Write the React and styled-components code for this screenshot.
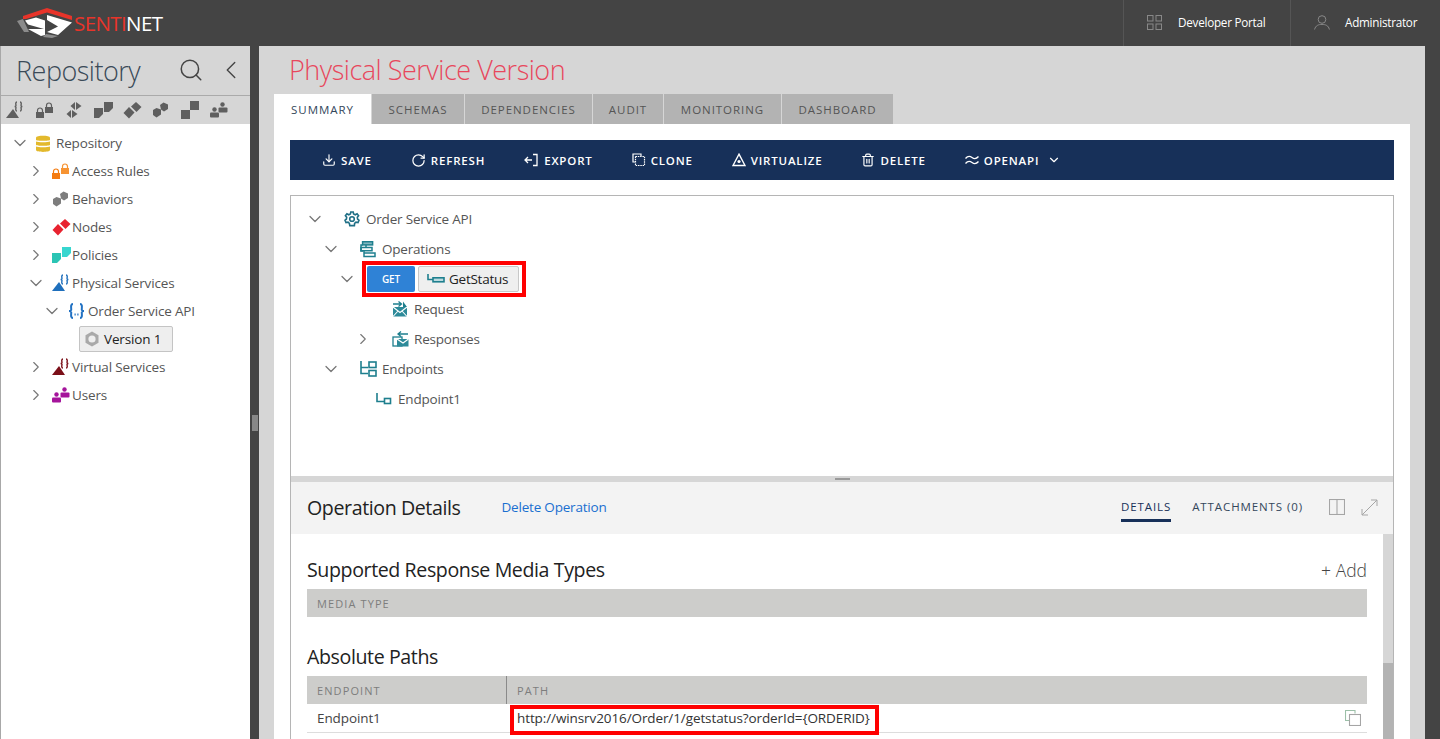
import React from "react";
import styled, { createGlobalStyle } from "styled-components";
import { ChevronDown, ChevronRight, ChevronLeft, Search, Download, RotateCw, Trash2 } from "lucide-react";

const GlobalStyle = createGlobalStyle`
  html, body {
    margin: 0;
    height: 100%;
    overflow: hidden;
    background: #444;
  }
  body {
    font-family: "Open Sans", "Noto Sans", "Liberation Sans", sans-serif;
    color: #555;
  }
  * {
    box-sizing: border-box;
  }
`;

const Page = styled.div`
  width: 1440px;
  height: 739px;
  display: flex;
  flex-direction: column;
  overflow: hidden;
`;

const TopBar = styled.header`
  flex: 0 0 46px;
  display: flex;
  align-items: stretch;
  background: #444;
`;
const Brand = styled.div`
  display: flex;
  align-items: center;
  padding-left: 16px;
  margin-right: auto;
`;
const BrandName = styled.span`
  font-size: 20.5px;
  font-weight: 400;
  letter-spacing: -0.6px;
  color: #fff;
  margin-left: 0;

  b {
    font-weight: 400;
    color: #e8342a;
  }
`;
const TopLink = styled.a`
  width: ${(p) => p.$width}px;
  display: flex;
  align-items: center;
  gap: ${(p) => p.$gap}px;
  padding: 0 0 2px 23px;
  border-left: 1px solid #555;
  color: #fff;
  font-size: 11.7px;
  letter-spacing: -0.25px;
`;

const Body = styled.div`
  flex: 1;
  min-height: 0;
  display: flex;
`;

const Sidebar = styled.aside`
  flex: 0 0 250px;
  display: flex;
  flex-direction: column;
  background: #fff;
  border-left: 1px solid #a8a8a8;
`;
const SideHead = styled.div`
  height: 49px;
  display: flex;
  align-items: center;
  padding: 0 4px 1px 15px;
  background: #d6d6d6;
  color: #3a4a58;
`;
const SideTitle = styled.h2`
  margin: 0 auto 0 0;
  font-size: 27px;
  font-weight: 300;
  letter-spacing: -0.5px;
`;
const SideTools = styled.div`
  display: flex;
  align-items: center;
  gap: 12px;
  color: #444;
`;
const FilterBar = styled.div`
  height: 29px;
  display: flex;
  align-items: center;
  gap: 9px;
  padding-left: 5px;
  background: #d6d6d6;
  border-top: 1px solid #aaa;
`;
const FilterIcon = styled.span`
  width: 20px;
  display: flex;
  justify-content: center;
`;
const SideTree = styled.div`
  padding-top: 5px;
`;
const SideRow = styled.div`
  height: 28px;
  display: flex;
  align-items: center;
  padding-left: ${(p) => 11 + p.$depth * 16}px;
  font-size: 13.5px;
  letter-spacing: -0.15px;
  color: #555;
`;
const Toggle = styled.span`
  flex: 0 0 16px;
  min-width: 0;
  width: 16px;
  display: flex;
  justify-content: center;
  color: #777;

  svg {
    flex-shrink: 0;
  }
`;
const SideIcon = styled.span`
  flex: 0 0 28px;
  display: flex;
  padding-left: 8px;
`;
const SelectedNode = styled.div`
  margin: 1px 0 1px 78px;
  width: 94px;
  height: 26px;
  display: flex;
  align-items: center;
  gap: 4px;
  padding-left: 4px;
  background: #eee;
  border: 1px solid #c4c4c4;
  border-radius: 2px;
  color: #222;
  font-size: 13.5px;
  letter-spacing: -0.15px;
`;

const Gutter = styled.div`
  flex: 0 0 9px;
  display: flex;
  align-items: flex-start;
  justify-content: center;
  background: #444;

  &::before {
    content: "";
    width: 6px;
    height: 16px;
    margin-top: 369px;
    background: #888;
  }
`;

const Main = styled.main`
  flex: 0 0 1166px;
  display: flex;
  flex-direction: column;
  background: #d6d6d6;
  padding: 0 15px;
`;
const PageTitle = styled.h1`
  height: 48px;
  margin: 0;
  padding: 7px 0 0 15px;
  font-size: 27px;
  line-height: 34px;
  font-weight: 300;
  letter-spacing: -0.48px;
  color: #e8475c;
`;
const Tabs = styled.nav`
  flex: 0 0 30px;
  display: flex;
  gap: 1px;
`;
const Tab = styled.a`
  width: ${(p) => p.$width}px;
  display: flex;
  align-items: center;
  justify-content: center;
  background: ${(p) => (p.$active ? "#fff" : "#b3b3b3")};
  color: ${(p) => (p.$active ? "#33475b" : "#555")};
  font-size: 11.5px;
  letter-spacing: 0.95px;
`;
const Content = styled.section`
  flex: 1;
  min-height: 0;
  display: flex;
  flex-direction: column;
  background: #fff;
  padding: 16px 16px 0;
`;
const Toolbar = styled.div`
  flex: 0 0 40px;
  display: flex;
  align-items: center;
  gap: 39px;
  padding-left: 32px;
  background: #173059;
  color: #fff;
`;
const ToolButton = styled.button`
  display: flex;
  align-items: center;
  gap: 5px;
  padding: 0;
  border: 0;
  background: none;
  color: inherit;
  font-family: inherit;
  font-size: 11.5px;
  font-weight: 600;
  letter-spacing: 0.82px;
`;

const Frame = styled.div`
  flex: 1;
  min-height: 0;
  margin-top: 15px;
  display: flex;
  flex-direction: column;
  border: 1px solid #b5b5b5;
  border-bottom: 0;
`;
const TreePane = styled.div`
  flex: 0 0 280px;
  padding-top: 8px;
`;
const OpRow = styled.div`
  height: 30px;
  display: flex;
  align-items: center;
  padding-left: ${(p) => 16 + p.$depth * 16}px;
  font-size: 13.5px;
  letter-spacing: -0.2px;
  color: #555;
`;
const OpIcon = styled.span`
  flex: 0 0 43px;
  display: flex;
  padding-left: 21px;
`;
const Method = styled.div`
  margin-left: 12px;
  padding-right: 2px;
  display: flex;
  gap: 3px;
  outline: 4px solid #f00;
  outline-offset: 1px;
`;
const GetBadge = styled.span`
  width: 48px;
  height: 26px;
  display: flex;
  align-items: center;
  justify-content: center;
  background: #2f82d6;
  border-radius: 2px;
  color: #fff;
  font-size: 10px;
  font-weight: 600;
`;
const OpName = styled.span`
  width: 101px;
  height: 26px;
  display: flex;
  align-items: center;
  gap: 4px;
  padding-left: 8px;
  background: #efefef;
  border: 1px solid #c8c8c8;
  border-radius: 2px;
  color: #222;
  font-size: 13.5px;
  letter-spacing: -0.25px;
`;

const Splitter = styled.div`
  flex: 0 0 6px;
  display: flex;
  align-items: center;
  justify-content: center;
  background: #d6d6d6;

  &::before {
    content: "";
    width: 15px;
    height: 2px;
    background: #999;
  }
`;
const DetailHead = styled.div`
  flex: 0 0 52px;
  display: flex;
  align-items: center;
  padding: 0 15px 2px 16px;
  background: #f3f3f3;
`;
const DetailTitle = styled.h3`
  margin: 0;
  font-size: 19.6px;
  font-weight: 400;
  letter-spacing: -0.4px;
  color: #222;
`;
const DeleteLink = styled.a`
  margin-left: 41px;
  margin-right: auto;
  font-size: 13.5px;
  letter-spacing: -0.2px;
  color: #1a6fd0;
`;
const DetailTab = styled.a`
  align-self: flex-start;
  height: 32px;
  margin-top: 8px;
  margin-right: ${(p) => p.$gap || 0}px;
  padding-top: 3px;
  display: flex;
  align-items: center;
  border-bottom: 3px solid ${(p) => (p.$active ? "#173059" : "transparent")};
  color: ${(p) => (p.$active ? "#173059" : "#33475b")};
  font-size: 11.5px;
  letter-spacing: 0.9px;
`;
const HeadIcon = styled.span`
  display: flex;
  margin-left: ${(p) => p.$gap}px;
  color: #a5a5a5;
`;

const DetailBody = styled.div`
  flex: 1;
  min-height: 0;
  display: flex;
`;
const Scroller = styled.div`
  flex: 1;
  min-width: 0;
  padding: 0 16px;
`;
const Scrollbar = styled.div`
  flex: 0 0 10px;
  display: flex;
  flex-direction: column;
  background: #d6d6d6;

  &::after {
    content: "";
    margin-top: auto;
    height: 76px;
    background: #b3b3b3;
  }
`;
const SectionHead = styled.div`
  height: ${(p) => p.$height}px;
  display: flex;
  align-items: flex-end;
  justify-content: space-between;
  padding-bottom: 6px;
`;
const SectionTitle = styled.h4`
  margin: 0;
  font-size: 19.6px;
  line-height: 26px;
  font-weight: 400;
  letter-spacing: -0.4px;
  color: #222;
`;
const AddLink = styled.a`
  font-size: 17.5px;
  line-height: 26px;
  font-weight: 300;
  color: #444;
`;
const Grid = styled.div`
  display: grid;
  grid-template-columns: ${(p) => p.$columns};
`;
const HeadCell = styled.div`
  height: 28px;
  display: flex;
  align-items: center;
  padding-left: 10px;
  background: #cdcdcb;
  border-left: ${(p) => (p.$divided ? "1px solid #8a8a8a" : "0")};
  color: #7d7d7d;
  font-size: 11px;
  letter-spacing: 1.1px;
`;
const Cell = styled.div`
  height: 29px;
  display: flex;
  align-items: center;
  padding-left: 10px;
  border-bottom: 1px solid #ddd;
  color: #444;
  font-size: 13.5px;
  letter-spacing: -0.1px;
`;
const PathCell = styled(Cell)`
  justify-content: space-between;
  padding-right: 6px;
`;
const PathText = styled.span`
  height: 22px;
  margin: 3px 0 0 -2px;
  padding: 0 5px 4px 3px;
  display: flex;
  align-items: center;
  outline: 4px solid #f00;
  color: #333;
`;
const CopyIcon = styled.span`
  display: flex;
`;
const Spacer = styled.div`
  height: 32px;
`;

const Logo = () => (
  <svg width="58" height="30" viewBox="0 0 58 30">
    <path d="M7 8 L31 0 L56 8 V12 L31 4.5 L10 11 H7 Z" fill="#e8342a" />
    <path d="M9 12.5 L20 9.5 L29 12.5 L29 27 L25 28 L12 21 L28 21 L12 16.5 Z" fill="#fff" />
    <path d="M31 7 L56 14.5 L42 27 L31 24 L42 18.5 L31 12 Z" fill="#fff" />
    <path d="M1 13 L7 11 L13 24 L8 24 Z" fill="#aaa" opacity="0.7" />
    <path d="M30 26 L42 28 L36 30 L27 29 Z" fill="#aaa" opacity="0.7" />
  </svg>
);

const Brace = ({ x, color }) => (
  <g fill="none" stroke={color} strokeWidth="1.4">
    <path d={`M${x + 2} 1 C${x} 1 ${x + 1} 4 ${x + 1} 4.5 C${x + 1} 5.5 ${x} 5.5 ${x - 0.4} 5.5 C${x} 5.5 ${x + 1} 5.5 ${x + 1} 6.5 C${x + 1} 7 ${x} 10 ${x + 2} 10`} />
    <path d={`M${x + 5} 1 C${x + 7} 1 ${x + 6} 4 ${x + 6} 4.5 C${x + 6} 5.5 ${x + 7} 5.5 ${x + 7.4} 5.5 C${x + 7} 5.5 ${x + 6} 5.5 ${x + 6} 6.5 C${x + 6} 7 ${x + 7} 10 ${x + 5} 10`} />
  </g>
);

const ServiceGlyph = ({ color, brace = color }) => (
  <svg width="20" height="18" viewBox="0 0 20 18">
    <path d="M0 17 L7 8 L13 17 Z" fill={color} />
    <Brace x={9} color={brace} />
  </svg>
);
const LockShape = ({ x, y, color }) => (
  <g>
    <rect x={x} y={y + 4} width="8" height="6" fill={color} />
    <path d={`M${x + 1.5} ${y + 4} V${y + 2.5} a2.5 2.5 0 0 1 5 0 V${y + 4}`} fill="none" stroke={color} strokeWidth="1.2" />
  </g>
);
const LocksGlyph = ({ color, second = color }) => (
  <svg width="18" height="18" viewBox="0 0 18 18">
    <LockShape x={0} y={7} color={color} />
    <LockShape x={9} y={2} color={second} />
  </svg>
);
const RoutesGlyph = ({ color }) => (
  <svg width="18" height="18" viewBox="0 0 18 18" fill={color}>
    <path d="M10 1 L5.5 5 L10 9 Z M11 1 L16.5 5 L11 9 Z M6 9 L1.5 13 L6 17 Z M7 9 L12.5 13 L7 17 Z" />
  </svg>
);
const PolicyGlyph = ({ color, second = color }) => (
  <svg width="19" height="16" viewBox="0 0 19 16">
    <path d="M0 6 H9 V12 L5 16 H0 Z" fill={color} />
    <path d="M10 0 H19 V6 L15 10 H10 Z" fill={second} />
  </svg>
);
const NodesGlyph = ({ color }) => (
  <svg width="19" height="17" viewBox="0 0 19 17" fill={color}>
    <path d="M6 5 L11.5 10.5 L6 16.5 L0.5 11 Z" />
    <path d="M13 0 L18.5 5 L13.5 10 L8 4.5 Z" />
  </svg>
);
const BehaviorsGlyph = ({ color }) => (
  <svg width="18" height="16" viewBox="0 0 18 16" fill={color}>
    <path d="M4.5 6 L9 7.5 L9 12.5 L4.5 15.5 L1 13 L1 8 Z" />
    <path d="M11.5 0.5 L16 2.5 L16 7 L12 9.5 L9 7.5 L8 3 Z" />
  </svg>
);
const StepsGlyph = ({ color }) => (
  <svg width="18" height="18" viewBox="0 0 18 18" fill={color}>
    <rect x="0" y="9" width="9" height="9" />
    <rect x="9" y="0" width="9" height="9" />
  </svg>
);
const UsersGlyph = ({ color }) => (
  <svg width="18" height="16" viewBox="0 0 18 16" fill={color}>
    <circle cx="4.5" cy="7.5" r="2.2" />
    <rect x="0" y="10.5" width="9" height="5" rx="1" />
    <circle cx="12.5" cy="2.5" r="2.2" />
    <rect x="8.5" y="5.5" width="9" height="5" rx="1" />
  </svg>
);
const DbGlyph = () => (
  <svg width="14" height="17" viewBox="0 0 14 17" fill="#e3b92c">
    <path d="M0 2.5 C0 0 14 0 14 2.5 V5 C14 6 0 6 0 5 Z" />
    <path d="M0 6.5 C2 7.6 12 7.6 14 6.5 V10 C14 11 0 11 0 10 Z" />
    <path d="M0 11.5 C2 12.6 12 12.6 14 11.5 V15 C14 17.5 0 17.5 0 15 Z" />
  </svg>
);
const ApiGlyph = () => (
  <svg width="17" height="16" viewBox="0 0 17 16" fill="none" stroke="#2272c3" strokeWidth="2">
    <path d="M5 1 C2 1 3.5 6 3.2 7 C3 7.8 2 8 1 8 C2 8 3 8.2 3.2 9 C3.5 10 2 15 5 15" />
    <path d="M12 1 C15 1 13.5 6 13.8 7 C14 7.8 15 8 16 8 C15 8 14 8.2 13.8 9 C13.5 10 15 15 12 15" />
    <path d="M6.5 11.5 h1.2 M9.3 11.5 h1.2" strokeWidth="2" />
  </svg>
);
const VersionGlyph = () => (
  <svg width="16" height="16" viewBox="0 0 16 16">
    <path d="M8 0.5 L14.5 4.2 V11.8 L8 15.5 L1.5 11.8 V4.2 Z" fill="#a9a9a9" />
    <circle cx="8" cy="8" r="3.6" fill="#eee" />
  </svg>
);

const teal = "#1e7f8e";
const GearGlyph = () => (
  <svg width="16" height="16" viewBox="0 0 16 16" fill="none" stroke="#1f6f86" strokeWidth="1.6">
    <circle cx="8" cy="8" r="2.3" />
    <path d="M6.8 1 H9.2 L9.6 3 L11.3 3.8 L13.1 2.8 L14.6 4.7 L13.3 6.3 L13.6 8 L15 9.3 L14 11.5 L12 11.2 L10.6 12.5 L10.4 14.6 H5.8 L5.4 12.5 L4 11.2 L2 11.5 L1 9.3 L2.4 8 L2.7 6.3 L1.4 4.7 L2.9 2.8 L4.7 3.8 L6.4 3 Z" />
  </svg>
);
const OperationsGlyph = () => (
  <svg width="16" height="17" viewBox="0 0 16 17" fill="none" stroke={teal} strokeWidth="1.5">
    <rect x="2.6" y="0.7" width="10" height="3.2" fill="#7fb5be" />
    <path d="M2.6 3.9 H1 V10 H3" />
    <rect x="1" y="6.5" width="11" height="3.2" />
    <path d="M4 10 V15.5 H15 V12 H4" />
    <path d="M6 3.9 V6.5" />
  </svg>
);
const OperationGlyph = () => (
  <svg width="18" height="10" viewBox="0 0 18 10" fill="none" stroke={teal} strokeWidth="1.6">
    <path d="M1 0 V5.5 H6" />
    <rect x="6" y="3.8" width="11" height="4" fill="#bcdadf" />
  </svg>
);
const RequestGlyph = () => (
  <svg width="16" height="16" viewBox="0 0 16 16">
    <path d="M1 3 H9 M6.5 0.5 L9.5 3 L6.5 5.5" fill="none" stroke={teal} strokeWidth="1.3" />
    <rect x="1" y="6" width="14" height="9.5" fill="#2d8a99" />
    <path d="M1 6 L8 11.5 L15 6 M1 15.5 L6 10 M15 15.5 L10 10" fill="none" stroke="#fff" strokeWidth="1.1" />
    <path d="M11 0.5 L15 6 H11 Z" fill={teal} />
  </svg>
);
const ResponsesGlyph = () => (
  <svg width="17" height="16" viewBox="0 0 17 16">
    <path d="M6 3 H16 M9 0.5 L6 3 L9 5.5" fill="none" stroke={teal} strokeWidth="1.3" />
    <rect x="1" y="6" width="9" height="9" fill="none" stroke={teal} strokeWidth="1.3" />
    <rect x="5" y="8" width="11.5" height="7.5" fill="#2d8a99" />
    <path d="M5 8 L11 12 L16.5 8" fill="none" stroke="#fff" strokeWidth="1.1" />
  </svg>
);
const EndpointsGlyph = () => (
  <svg width="17" height="16" viewBox="0 0 17 16" fill="none" stroke={teal} strokeWidth="1.6">
    <path d="M1 0 V12.5 H8 M1 6.5 H8" />
    <rect x="9" y="1" width="7" height="5.5" />
    <rect x="9" y="9.5" width="7" height="5.5" />
  </svg>
);
const EndpointGlyph = () => (
  <svg width="16" height="12" viewBox="0 0 16 12" fill="none" stroke={teal} strokeWidth="1.6">
    <path d="M1 0 V8.5 H8" />
    <rect x="8.5" y="5.5" width="6" height="5" />
  </svg>
);

const ExportGlyph = () => (
  <svg width="15" height="14" viewBox="0 0 15 14" fill="none" stroke="currentColor" strokeWidth="1.3">
    <path d="M9 1.5 H13 V12.5 H9 M8 7 H1 M4 4 L1 7 L4 10" />
  </svg>
);
const CloneGlyph = () => (
  <svg width="14" height="14" viewBox="0 0 14 14" fill="none" stroke="currentColor" strokeWidth="1.2">
    <path d="M9 3 V1 H1 V9 H3" />
    <rect x="3.5" y="3.5" width="9" height="9" strokeDasharray="1.5 0.8" />
  </svg>
);
const VirtualizeGlyph = () => (
  <svg width="14" height="14" viewBox="0 0 14 14" fill="none" stroke="currentColor" strokeWidth="1.4">
    <path d="M7 1.2 L13 12.5 H1 Z" />
    <circle cx="7" cy="8.5" r="1.6" fill="currentColor" stroke="none" />
  </svg>
);
const ApproxGlyph = () => (
  <svg width="14" height="14" viewBox="0 0 14 14" fill="none" stroke="currentColor" strokeWidth="1.3">
    <path d="M0.5 5.5 C3 2.5 5 3 7 4.5 C9 6 11 6.5 13.5 3.5" />
    <path d="M0.5 10.5 C3 7.5 5 8 7 9.5 C9 11 11 11.5 13.5 8.5" />
  </svg>
);
const PortalGlyph = () => (
  <svg width="15" height="15" viewBox="0 0 15 15" fill="none" stroke="#888" strokeWidth="1">
    <rect x="0.5" y="0.5" width="5.5" height="5.5" />
    <rect x="9" y="0.5" width="5.5" height="5.5" />
    <rect x="0.5" y="9" width="5.5" height="5.5" />
    <rect x="9" y="9" width="5.5" height="5.5" />
  </svg>
);
const AccountGlyph = () => (
  <svg width="16" height="15" viewBox="0 0 16 15" fill="none" stroke="#888" strokeWidth="1">
    <circle cx="8" cy="4.5" r="3.8" />
    <path d="M0.6 14.5 C1.5 10.5 4.5 9.4 8 9.4 C11.5 9.4 14.5 10.5 15.4 14.5" />
  </svg>
);
const SplitGlyph = () => (
  <svg width="16" height="16" viewBox="0 0 16 16" fill="none" stroke="currentColor" strokeWidth="1.1">
    <rect x="0.5" y="0.5" width="15" height="15" />
    <path d="M8 0.5 V15.5" />
  </svg>
);
const ExpandGlyph = () => (
  <svg width="17" height="17" viewBox="0 0 17 17" fill="none" stroke="currentColor" strokeWidth="1">
    <path d="M1 16 L16 1 M10 1 H16 V7 M1 10 V16 H7" />
  </svg>
);
const CopyGlyph = () => (
  <svg width="16" height="16" viewBox="0 0 16 16" fill="none" strokeWidth="1.1">
    <path d="M10 3.5 V0.5 H0.5 V10.5 H4" stroke="#9cc0a8" />
    <rect x="4.5" y="4.5" width="11" height="11" stroke="#a5a5a5" />
  </svg>
);

const Caret = ({ open }) => (
  <Toggle>{open ? <ChevronDown size={20} strokeWidth={1.5} /> : <ChevronRight size={18} strokeWidth={1.5} />}</Toggle>
);

const grey = "#5f5f5f";
const filters = [
  <ServiceGlyph color={grey} />,
  <LocksGlyph color={grey} />,
  <RoutesGlyph color={grey} />,
  <PolicyGlyph color={grey} />,
  <NodesGlyph color={grey} />,
  <BehaviorsGlyph color={grey} />,
  <StepsGlyph color={grey} />,
  <UsersGlyph color={grey} />,
];

const sideTree = [
  { depth: 1, label: "Access Rules", icon: <LocksGlyph color="#f47b10" second="#f79433" /> },
  { depth: 1, label: "Behaviors", icon: <BehaviorsGlyph color="#7d7d7d" /> },
  { depth: 1, label: "Nodes", icon: <NodesGlyph color="#e8222f" /> },
  { depth: 1, label: "Policies", icon: <PolicyGlyph color="#2bc4b4" second="#37d6cf" /> },
  { depth: 1, label: "Physical Services", open: true, icon: <ServiceGlyph color="#1f6fbc" /> },
  { depth: 2, label: "Order Service API", open: true, icon: <ApiGlyph /> },
];

const toolbar = [
  { label: "SAVE", icon: <Download size={14} /> },
  { label: "REFRESH", icon: <RotateCw size={15} /> },
  { label: "EXPORT", icon: <ExportGlyph /> },
  { label: "CLONE", icon: <CloneGlyph /> },
  { label: "VIRTUALIZE", icon: <VirtualizeGlyph /> },
  { label: "DELETE", icon: <Trash2 size={14} /> },
  { label: "OPENAPI", icon: <ApproxGlyph /> },
];

const tabs = [
  { label: "SUMMARY", width: 97, active: true },
  { label: "SCHEMAS", width: 92 },
  { label: "DEPENDENCIES", width: 127 },
  { label: "AUDIT", width: 70 },
  { label: "MONITORING", width: 117 },
  { label: "DASHBOARD", width: 111 },
];

export default function App() {
  return (
    <Page>
      <GlobalStyle />
      <TopBar>
        <Brand>
          <Logo />
          <BrandName>
            <b>SENTI</b>NET
          </BrandName>
        </Brand>
        <TopLink $width={167} $gap={16}>
          <PortalGlyph />
          Developer Portal
        </TopLink>
        <TopLink $width={150} $gap={15}>
          <AccountGlyph />
          Administrator
        </TopLink>
      </TopBar>
      <Body>
        <Sidebar>
          <SideHead>
            <SideTitle>Repository</SideTitle>
            <SideTools>
              <Search size={26} strokeWidth={1.4} />
              <ChevronLeft size={30} strokeWidth={1.1} />
            </SideTools>
          </SideHead>
          <FilterBar>
            {filters.map((icon, i) => (
              <FilterIcon key={i}>{icon}</FilterIcon>
            ))}
          </FilterBar>
          <SideTree>
            <SideRow $depth={0}>
              <Caret open />
              <SideIcon>
                <DbGlyph />
              </SideIcon>
              Repository
            </SideRow>
            {sideTree.map((node) => (
              <SideRow key={node.label} $depth={node.depth}>
                <Caret open={node.open} />
                <SideIcon>{node.icon}</SideIcon>
                {node.label}
              </SideRow>
            ))}
            <SelectedNode>
              <VersionGlyph />
              Version 1
            </SelectedNode>
            <SideRow $depth={1}>
              <Caret />
              <SideIcon>
                <ServiceGlyph color="#7b0f18" />
              </SideIcon>
              Virtual Services
            </SideRow>
            <SideRow $depth={1}>
              <Caret />
              <SideIcon>
                <UsersGlyph color="#a5149b" />
              </SideIcon>
              Users
            </SideRow>
          </SideTree>
        </Sidebar>
        <Gutter />
        <Main>
          <PageTitle>Physical Service Version</PageTitle>
          <Tabs>
            {tabs.map((tab) => (
              <Tab key={tab.label} $width={tab.width} $active={tab.active}>
                {tab.label}
              </Tab>
            ))}
          </Tabs>
          <Content>
            <Toolbar>
              {toolbar.map((item) => (
                <ToolButton key={item.label}>
                  {item.icon}
                  {item.label}
                  {item.label === "OPENAPI" && <ChevronDown size={14} style={{ marginLeft: 3 }} />}
                </ToolButton>
              ))}
            </Toolbar>
            <Frame>
              <TreePane>
                <OpRow $depth={0}>
                  <Caret open />
                  <OpIcon>
                    <GearGlyph />
                  </OpIcon>
                  Order Service API
                </OpRow>
                <OpRow $depth={1}>
                  <Caret open />
                  <OpIcon>
                    <OperationsGlyph />
                  </OpIcon>
                  Operations
                </OpRow>
                <OpRow $depth={2}>
                  <Caret open />
                  <Method>
                    <GetBadge>GET</GetBadge>
                    <OpName>
                      <OperationGlyph />
                      GetStatus
                    </OpName>
                  </Method>
                </OpRow>
                <OpRow $depth={3}>
                  <Toggle />
                  <OpIcon>
                    <RequestGlyph />
                  </OpIcon>
                  Request
                </OpRow>
                <OpRow $depth={3}>
                  <Caret />
                  <OpIcon>
                    <ResponsesGlyph />
                  </OpIcon>
                  Responses
                </OpRow>
                <OpRow $depth={1}>
                  <Caret open />
                  <OpIcon>
                    <EndpointsGlyph />
                  </OpIcon>
                  Endpoints
                </OpRow>
                <OpRow $depth={2}>
                  <Toggle />
                  <OpIcon>
                    <EndpointGlyph />
                  </OpIcon>
                  Endpoint1
                </OpRow>
              </TreePane>
              <Splitter />
              <DetailHead>
                <DetailTitle>Operation Details</DetailTitle>
                <DeleteLink>Delete Operation</DeleteLink>
                <DetailTab $active $gap={21}>
                  DETAILS
                </DetailTab>
                <DetailTab>ATTACHMENTS (0)</DetailTab>
                <HeadIcon $gap={26}>
                  <SplitGlyph />
                </HeadIcon>
                <HeadIcon $gap={16}>
                  <ExpandGlyph />
                </HeadIcon>
              </DetailHead>
              <DetailBody>
                <Scroller>
                  <SectionHead $height={55}>
                    <SectionTitle>Supported Response Media Types</SectionTitle>
                    <AddLink>+ Add</AddLink>
                  </SectionHead>
                  <Grid $columns="1fr">
                    <HeadCell>MEDIA TYPE</HeadCell>
                  </Grid>
                  <Spacer />
                  <SectionHead $height={27}>
                    <SectionTitle>Absolute Paths</SectionTitle>
                  </SectionHead>
                  <Grid $columns="199px 1fr">
                    <HeadCell>ENDPOINT</HeadCell>
                    <HeadCell $divided>PATH</HeadCell>
                    <Cell>Endpoint1</Cell>
                    <PathCell>
                      <PathText>http://winsrv2016/Order/1/getstatus?orderId={"{ORDERID}"}</PathText>
                      <CopyIcon>
                        <CopyGlyph />
                      </CopyIcon>
                    </PathCell>
                  </Grid>
                </Scroller>
                <Scrollbar />
              </DetailBody>
            </Frame>
          </Content>
        </Main>
      </Body>
    </Page>
  );
}
